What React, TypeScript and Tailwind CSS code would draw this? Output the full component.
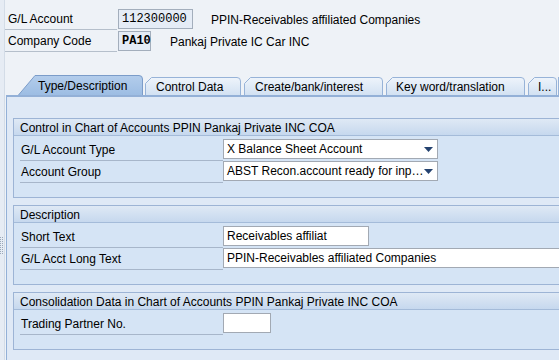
import React, { useId } from "react";

type TabProps = {
  label: string;
  w: number;
  active?: boolean;
  boxClass: string;
  textClass: string;
};

function Tab({ label, w, active, boxClass, textClass }: TabProps) {
  const id = useId().replace(/:/g, "");
  const h = active ? 20 : 18;
  const outline = active
    ? `M0.5,${h} L17,0.5 L${w - 4},0.5 Q${w - 0.5},0.5 ${w - 0.5},4 L${w - 0.5},${h}`
    : `M0.5,${h} L0.5,6.5 L6.5,0.5 L${w - 4},0.5 Q${w - 0.5},0.5 ${w - 0.5},4 L${w - 0.5},${h}`;
  return (
    <div className={`relative shrink-0 ${boxClass}`}>
      <svg className="absolute inset-0" width={w} height={h}>
        <defs>
          <linearGradient id={`g${id}`} x1="0" y1="0" x2="0" y2="1">
            {active ? (
              <>
                <stop offset="0" stopColor="#b3cdec" />
                <stop offset="1" stopColor="#9dbde3" />
              </>
            ) : (
              <>
                <stop offset="0" stopColor="#eef4fb" />
                <stop offset="1" stopColor="#d2e1f2" />
              </>
            )}
          </linearGradient>
        </defs>
        <path d={outline + " Z"} fill={`url(#g${id})`} stroke="none" />
        <path d={outline} fill="none" stroke={active ? "#7b9cc9" : "#97b3d8"} strokeWidth="1" />
      </svg>
      <div className={`relative flex h-full items-center whitespace-nowrap ${textClass}`}>{label}</div>
    </div>
  );
}

function Arrow() {
  return (
    <svg width="9" height="5" viewBox="0 0 9 5" className="shrink-0">
      <polygon points="0,0 9,0 4.5,5" fill="#24426f" />
    </svg>
  );
}

function Row({ label, children }: { label: string; children: React.ReactNode }) {
  return (
    <div className="flex h-[22px] items-start">
      <div className="flex h-[22px] w-[203px] shrink-0 items-center border-b border-[#a7b6ca] pl-[1px] pt-[1px]">
        {label}
      </div>
      {children}
    </div>
  );
}

function Group({ title, children }: { title: string; children: React.ReactNode }) {
  return (
    <div className="w-[600px] shrink-0 border border-[#9db4d5] bg-[#d5e4f5]">
      <div className="flex h-[17px] items-center border-b border-[#a4bbd9] bg-gradient-to-b from-[#dfe9f5] to-[#c6d8ee] pl-[6px] pt-[1px] whitespace-nowrap">
        {title}
      </div>
      <div className="flex flex-col pl-[6px] pt-[3px] pb-[14px]">{children}</div>
    </div>
  );
}

export default function App() {
  return (
    <div className="flex h-[360px] w-[559px] overflow-hidden bg-[#eef2f7] text-[12px] leading-none text-black [font-family:'Liberation_Sans',Arial,sans-serif]">
      <div className="flex w-[5px] shrink-0 flex-col border-r border-[#d3dce7] bg-[#e6ecf4]">
        <div className="mt-[237px] ml-[0px] h-[17px] w-[3px] border-l border-r border-dotted border-[#9aa8b9]" />
      </div>
      <div className="flex min-w-0 flex-1 flex-col">
        <div className="flex flex-col pt-[8px]">
          <div className="flex h-[22px] items-center">
            <div className="flex h-[22px] w-[112px] shrink-0 items-center border-b border-[#b5bfcb] pl-[3px] pt-[1px]">
              G/L Account
            </div>
            <div className="ml-[1px] flex h-[20px] w-[75px] shrink-0 items-center border border-[#a3aebc] bg-[#e5ecf6] pl-[3px] text-[12px] [font-family:'Liberation_Mono',monospace]">
              112300000
            </div>
            <span className="ml-[18px] whitespace-nowrap pt-[1px]">PPIN-Receivables affiliated Companies</span>
          </div>
          <div className="flex h-[22px] items-center">
            <div className="flex h-[22px] w-[112px] shrink-0 items-center border-b border-[#b5bfcb] pl-[3px] pt-[1px]">
              Company Code
            </div>
            <div className="ml-[1px] flex h-[20px] w-[33px] shrink-0 items-center border border-[#a3aebc] bg-[#e5ecf6] pl-[3px] text-[12px] font-bold [font-family:'Liberation_Mono',monospace]">
              PA10
            </div>
            <span className="ml-[19px] whitespace-nowrap pt-[1px]">Pankaj Private IC Car INC</span>
          </div>
        </div>

        <div className="mt-[23px] flex h-[20px] items-end pl-[13px]">
          <Tab label="Type/Description" w={125} active boxClass="w-[125px] h-[20px]" textClass="pl-[20px] pt-[2px]" />
          <Tab label="Control Data" w={96} boxClass="ml-[2px] w-[96px] h-[18px]" textClass="pl-[11px] pt-[1px]" />
          <Tab label="Create/bank/interest" w={139} boxClass="ml-[3px] w-[139px] h-[18px]" textClass="pl-[11px] pt-[1px]" />
          <Tab label="Key word/translation" w={139} boxClass="ml-[3px] w-[139px] h-[18px]" textClass="pl-[10px] pt-[1px]" />
          <Tab label="I..." w={29} boxClass="ml-[3px] w-[29px] h-[18px]" textClass="pl-[10px] pt-[1px]" />
          <div className="ml-[1px] h-[18px] w-[3px] shrink-0 border-l border-t border-[#97b3d8] bg-[#e3ecf7]" />
        </div>

        <div className="ml-[1px] flex min-h-0 flex-1 flex-col gap-[7px] overflow-hidden border-l border-t-2 border-[#93b0d7] bg-[#dfe9f6] pl-[6px] pt-[21px]">
          <Group title="Control in Chart of Accounts PPIN Pankaj Private INC COA">
            <Row label="G/L Account Type">
              <div className="flex h-[20px] w-[215px] shrink-0 items-center justify-between border border-[#a2a9b3] bg-white pl-[3px] pr-[4px]">
                <span className="whitespace-nowrap">X Balance Sheet Account</span>
                <Arrow />
              </div>
            </Row>
            <Row label="Account Group">
              <div className="flex h-[20px] w-[215px] shrink-0 items-center justify-between border border-[#a2a9b3] bg-white pl-[3px] pr-[4px]">
                <span className="whitespace-nowrap">ABST Recon.account ready for inp…</span>
                <Arrow />
              </div>
            </Row>
          </Group>

          <Group title="Description">
            <Row label="Short Text">
              <div className="flex h-[20px] w-[146px] shrink-0 items-center border border-[#a2a9b3] bg-white pl-[3px] whitespace-nowrap">
                Receivables affiliat
              </div>
            </Row>
            <Row label="G/L Acct Long Text">
              <div className="flex h-[20px] w-[340px] shrink-0 items-center border border-[#a2a9b3] bg-white pl-[3px] whitespace-nowrap">
                PPIN-Receivables affiliated Companies
              </div>
            </Row>
          </Group>

          <Group title="Consolidation Data in Chart of Accounts PPIN Pankaj Private INC COA">
            <Row label="Trading Partner No.">
              <div className="h-[20px] w-[48px] shrink-0 border border-[#a2a9b3] bg-white" />
            </Row>
          </Group>
        </div>
      </div>
    </div>
  );
}
